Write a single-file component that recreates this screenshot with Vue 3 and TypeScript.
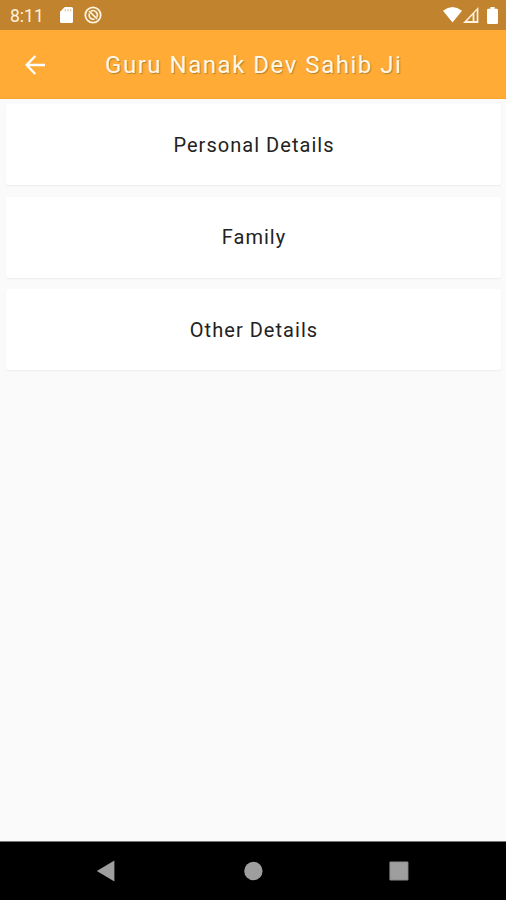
<script setup lang="ts">
const title: string = 'Guru Nanak Dev Sahib Ji'
const sections: string[] = ['Personal Details', 'Family', 'Other Details']
</script>

<template>
  <div class="screen">
    <div class="status-bar">
      <span class="clock">8:11</span>
      <svg class="sd" width="13" height="16" viewBox="0 0 13 16">
        <path d="M4.8 0H11.5Q13 0 13 1.5V14.5Q13 16 11.5 16H1.5Q0 16 0 14.5V4.8Z" fill="#fff" />
        <path d="M5.3 2v2.4M8 2v2.4M10.7 2v2.4" stroke="#e6c79c" stroke-width="1.2" />
      </svg>
      <svg class="sync" width="18" height="18" viewBox="0 0 18 18" fill="none" stroke="#fff3e0">
        <circle cx="9" cy="9" r="7.7" stroke-width="1.8" />
        <path d="M5.4 7.4A4.2 4.2 0 0 0 10.6 13M6.8 5.2A4.4 4.4 0 0 1 12.9 11" stroke-width="1.6" />
        <path d="M5 5.2L13.2 12.8" stroke-width="1.7" />
      </svg>
      <span class="spacer"></span>
      <svg class="wifi" width="19" height="16" viewBox="0 0 19 16">
        <path d="M0 3.7Q9.5-3.5 19 3.7L9.5 15.5Z" fill="#fff" />
      </svg>
      <svg class="signal" width="16" height="16" viewBox="0 0 16 16">
        <path d="M15.4 0V16H0Z" fill="#fff3e0" />
        <path d="M9.6 8V14H4.2Z" fill="#c1832d" />
        <path d="M11.4 6.1L13.7 3.6V14H11.4Z" fill="#c1832d" />
      </svg>
      <svg class="battery" width="11" height="17" viewBox="0 0 11 17">
        <path d="M3.4 0H7.6V1.8H9.7Q11 1.8 11 3.1V15.7Q11 17 9.7 17H1.3Q0 17 0 15.7V3.1Q0 1.8 1.3 1.8H3.4Z" fill="#fff" />
      </svg>
    </div>
    <header class="app-bar">
      <svg class="back" width="20" height="20" viewBox="0 0 20 20" fill="none" stroke="#fff" stroke-width="2.3">
        <path d="M10.3 1L1.6 10L10.3 19M1.8 10H20" />
      </svg>
      <h1 class="title">{{ title }}</h1>
    </header>
    <main class="list">
      <button v-for="section in sections" :key="section" class="card">{{ section }}</button>
    </main>
    <nav class="nav-bar">
      <svg width="20" height="22" viewBox="0 0 20 22"><path d="M0.8 11L18.4 0.6V21.4Z" fill="#9e9e9e" /></svg>
      <svg width="20" height="20" viewBox="0 0 20 20"><circle cx="10.4" cy="10" r="9.2" fill="#9e9e9e" /></svg>
      <svg width="20" height="20" viewBox="0 0 20 20"><rect x="0.4" y="0.4" width="19" height="19" rx="1.2" fill="#8c8c8c" /><rect x="1.4" y="1.4" width="17" height="17" fill="#9e9e9e" /></svg>
    </nav>
  </div>
</template>

<style>
body {
  margin: 0;
}
</style>

<style scoped>
.screen {
  display: flex;
  flex-direction: column;
  height: 900px;
  background: #fafafa;
  font-family: Roboto, sans-serif;
  overflow: hidden;
}
.status-bar {
  display: flex;
  align-items: center;
  box-sizing: border-box;
  height: 30px;
  padding: 0 8px 0 10px;
  background: #c1832d;
  flex: none;
}
.clock {
  width: 50px;
  padding-top: 2px;
  font-size: 17.5px;
  line-height: 28px;
  color: #fff3e0;
}
.sync {
  margin-left: 11px;
}
.spacer {
  flex: 1;
}
.signal {
  margin-left: 1px;
}
.battery {
  margin-left: 8px;
}
.app-bar {
  display: flex;
  align-items: center;
  box-sizing: border-box;
  height: 69px;
  padding: 1px 0 0 25px;
  background: #ffab35;
  border-bottom: 1px solid #f5a42c;
  flex: none;
}
.title {
  margin: 1px 0 0 60px;
  font-size: 24px;
  line-height: 30px;
  font-weight: 400;
  letter-spacing: 1.53px;
  color: #fff8e8;
  text-shadow: 1px 1px 1px rgba(110, 90, 40, 0.5);
  white-space: nowrap;
}
.list {
  display: flex;
  flex-direction: column;
  gap: 11.5px;
  padding: 5px 5px 0 6px;
  flex: 1;
}
.card {
  height: 81px;
  padding: 0;
  border: 0;
  border-radius: 3px;
  background: #fff;
  box-shadow: 0 1px 2px rgba(0, 0, 0, 0.06);
  font-family: inherit;
  font-size: 20px;
  letter-spacing: 1.04px;
  text-indent: 1px;
  color: #222;
}
.nav-bar {
  display: flex;
  align-items: center;
  justify-content: space-between;
  box-sizing: border-box;
  height: 59px;
  padding: 0 97px 0 96px;
  background: #000;
  border-top: 1px solid #777;
  flex: none;
}
</style>
